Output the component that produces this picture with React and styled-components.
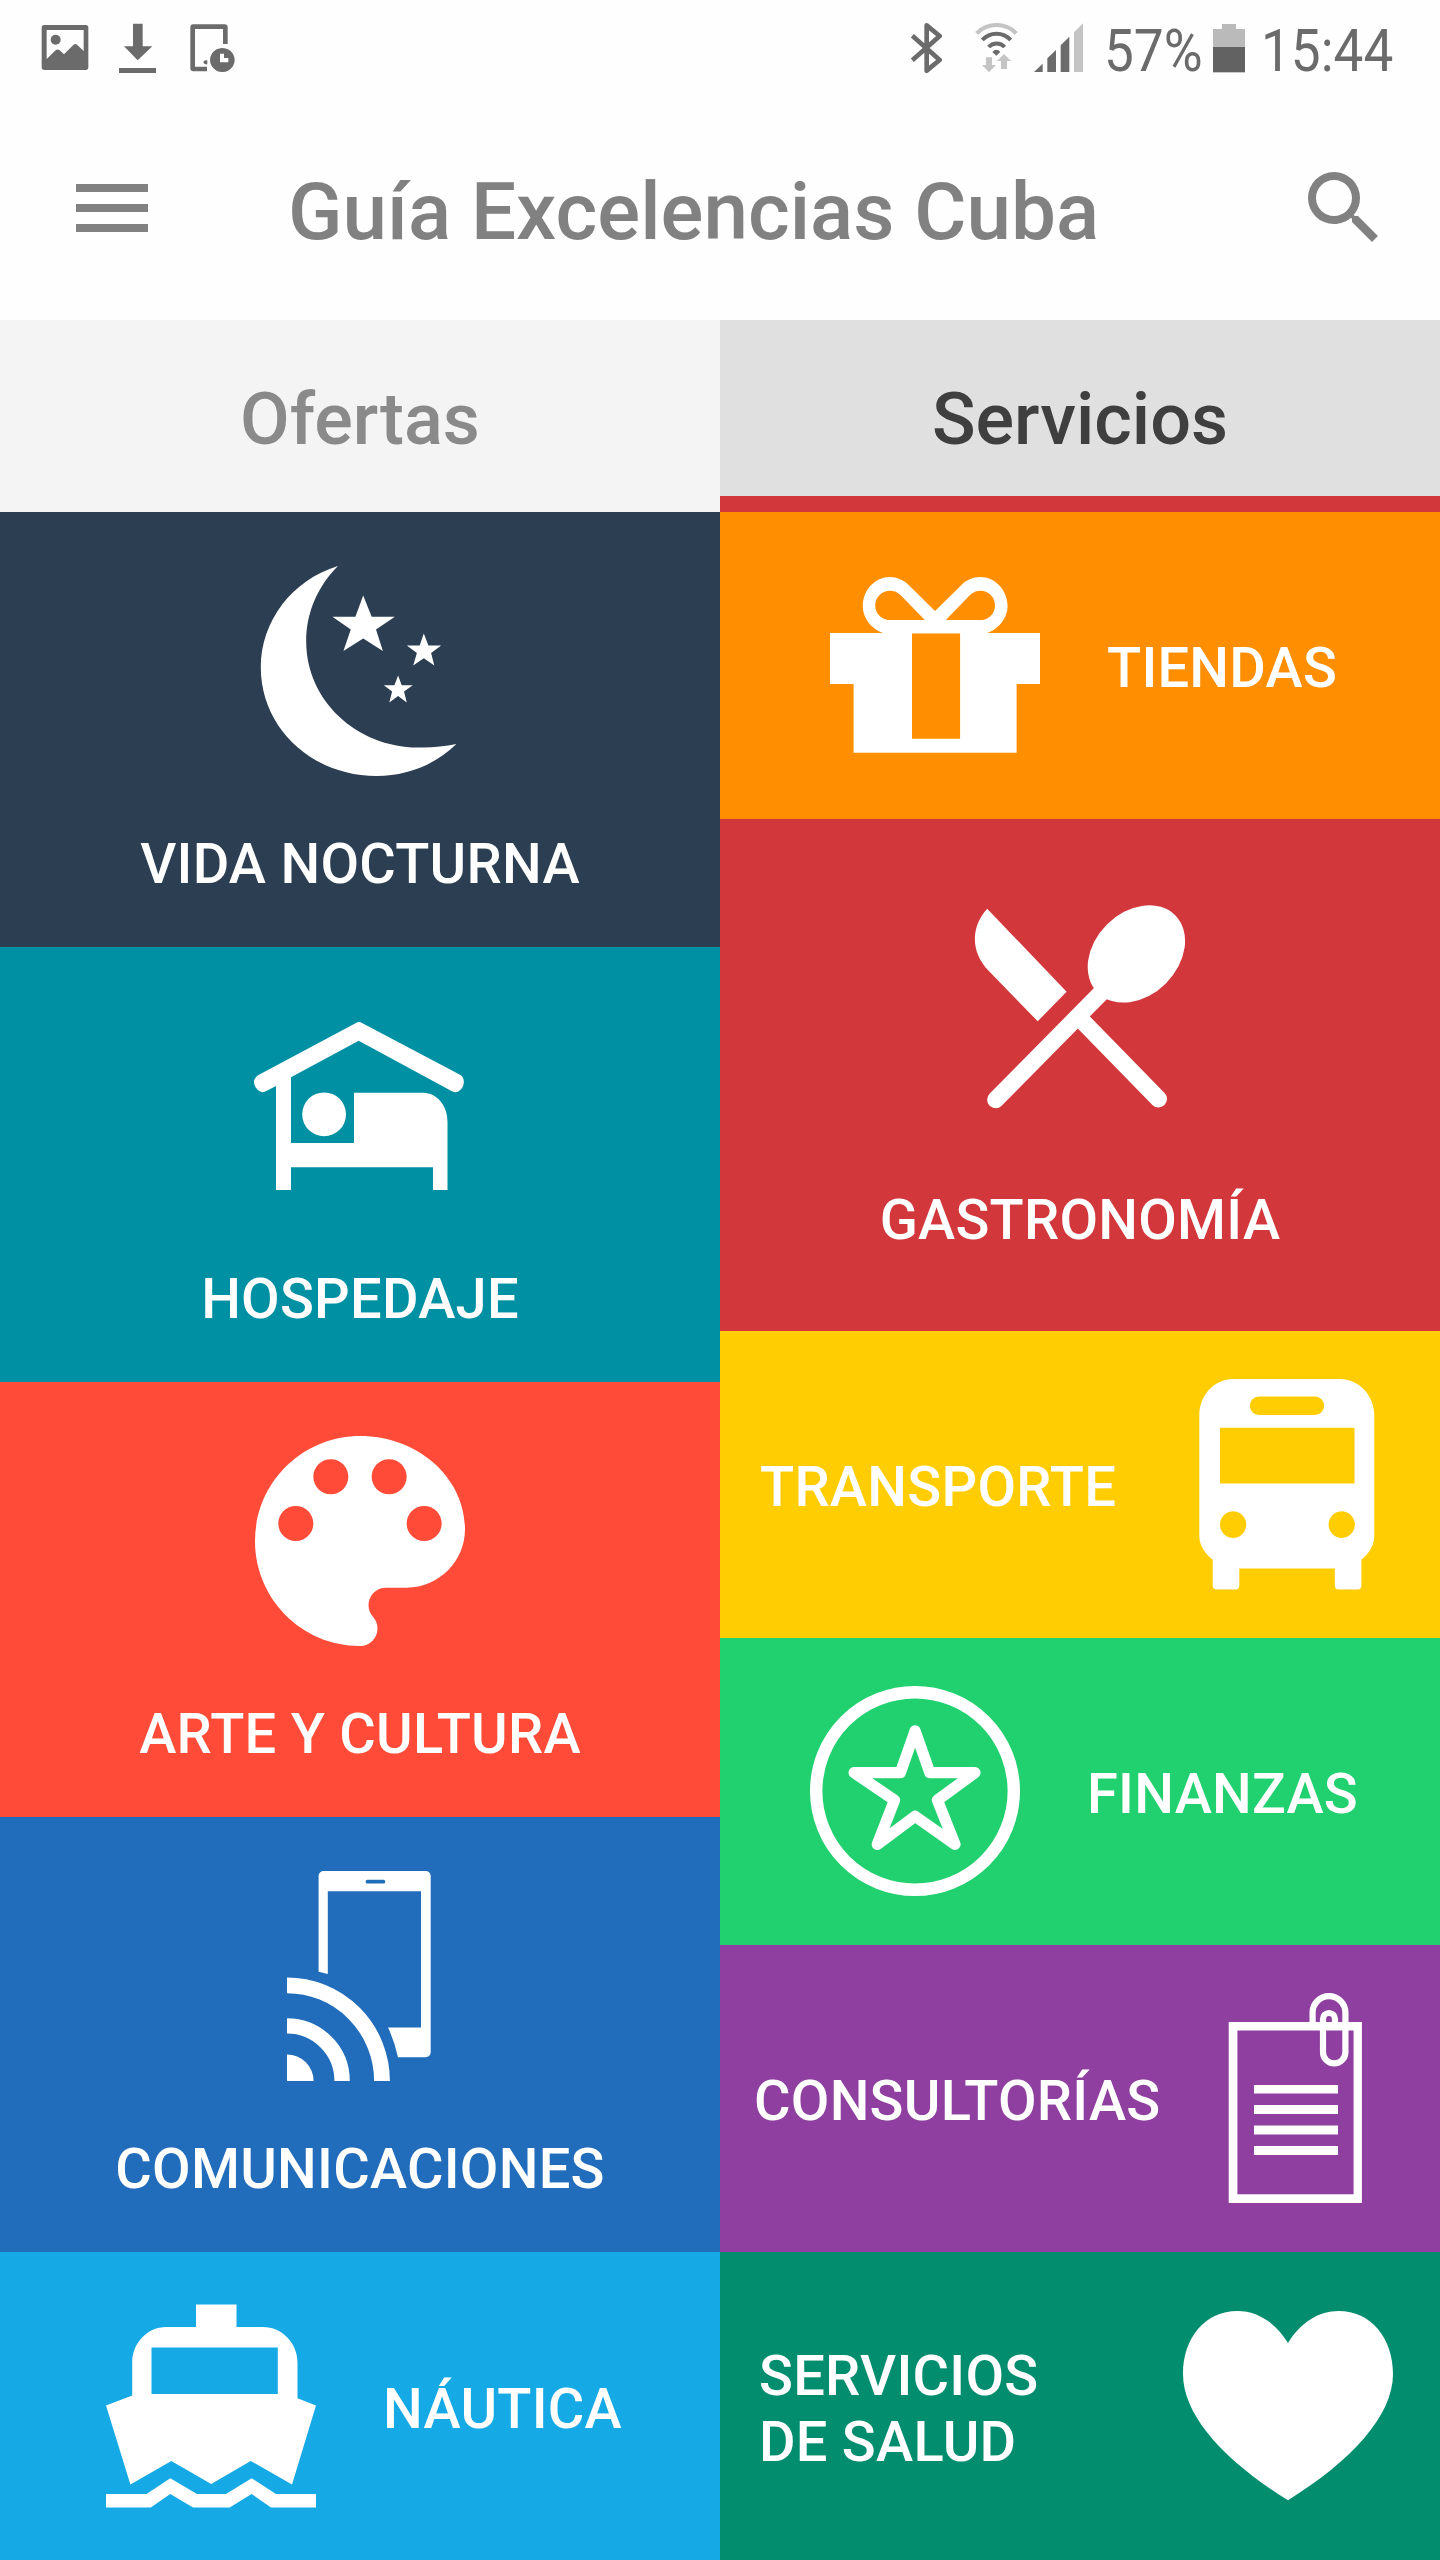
import React from 'react';
import styled, { createGlobalStyle } from 'styled-components';
import { MdMenu, MdSearch } from 'react-icons/md';

const GlobalStyle = createGlobalStyle`
  body {
    margin: 0;
    background-color: #fefefe;
    font-family: Roboto, 'Liberation Sans', sans-serif;
  }
`;

const Screen = styled.div`
  display: flex;
  flex-direction: column;
  width: 1440px;
  height: 2560px;
  overflow: hidden;
`;

const StatusBar = styled.div`
  display: flex;
  justify-content: space-between;
  box-sizing: border-box;
  height: 96px;
  padding: 23px 42px 0 41px;
  color: #6b6b6b;
`;

const StatusGroup = styled.div`
  display: flex;
  align-items: flex-start;
`;

const StatusIcon = styled.svg`
  display: block;
  flex: none;
  height: 50px;
  width: ${props => props.$width}px;
  margin-right: ${props => props.$gap || 0}px;
  fill: currentColor;
  .light {
    fill: #c4c4c4;
  }
`;

const StatusText = styled.div`
  width: ${props => props.$width}px;
  height: 50px;
  margin-right: ${props => props.$gap || 0}px;
  font-size: 60px;
  line-height: 56px;
  white-space: nowrap;
  span {
    display: inline-block;
    transform: scaleX(0.885);
    transform-origin: left;
  }
`;

const AppBar = styled.header`
  display: flex;
  align-items: center;
  height: 224px;
  padding: 0 48px 0 64px;
  color: #818181;
  svg {
    display: block;
    width: 96px;
    height: 96px;
  }
`;

const Title = styled.h1`
  flex: 1;
  margin: 0 0 0 128px;
  padding-top: 7px;
  font-size: 80px;
  font-weight: 500;
  line-height: 94px;
  white-space: nowrap;
`;

const Tabs = styled.nav`
  display: grid;
  grid-template-columns: 1fr 1fr;
  height: 192px;
`;

const Tab = styled.div`
  display: flex;
  align-items: center;
  justify-content: center;
  box-sizing: border-box;
  height: 192px;
  padding-top: 7px;
  font-size: 72px;
  font-weight: 500;
  color: ${props => (props.$active ? '#3f3f3f' : '#8a8a8a')};
  background-color: ${props => (props.$active ? '#e0e0e0' : '#f4f4f4')};
  box-shadow: ${props => (props.$active ? 'inset 0 -16px #d2373b' : 'none')};
`;

const Grid = styled.main`
  display: grid;
  grid-template-columns: repeat(2, minmax(0, 1fr));
`;

const Column = styled.div`
  display: flex;
  flex-direction: column;
`;

const Tile = styled.div`
  display: flex;
  box-sizing: border-box;
  height: ${props => props.$height}px;
  color: white;
  background-color: ${props => props.$color};
`;

const StackedTile = styled(Tile)`
  flex-direction: column;
  align-items: center;
  gap: ${props => props.$gap || 48}px;
  padding-top: ${props => props.$top || 54}px;
`;

const RowTile = styled(Tile)`
  align-items: center;
  justify-content: ${props => (props.$spread ? 'space-between' : 'flex-start')};
  gap: ${props => (props.$spread ? 0 : 67)}px;
  padding: 0 ${props => props.$right || 0}px 0 ${props => props.$left}px;
  svg {
    align-self: flex-start;
    margin-top: 48px;
  }
`;

const Label = styled.div`
  padding: 7px 0 2px;
  font-size: 56px;
  font-weight: 500;
  line-height: 66px;
  letter-spacing: 0.25px;
  white-space: nowrap;
`;

const Icon = styled.svg`
  display: block;
  flex: none;
  width: 210px;
  height: 210px;
  overflow: visible;
  fill: white;
  .line {
    fill: none;
    stroke: white;
  }
`;

const Moon = () => (
  <Icon viewBox="0 0 210 210">
    <path d="M83 0C37 14 5.8 55 5.8 101.5C5.8 162 57 210 121.5 210C153 210 181 198 201.4 178C189 180.5 176 182 163 181.5C101 181 51.2 134 51.2 75.4C51.2 46 63 20 83 0z" />
    <path d="M108.2 29.6L116.7 50.7H139.9L121 63.4L127.9 85L108.2 72.6L88.4 85L95.8 63.4L77.4 50.7H100.4z" />
    <path d="M168.8 67.4L173.4 79.4H186.2L176.1 87.1L179.3 99.5L168.8 92.3L158.2 99.5L161.9 87.1L151.8 79.4H164.7z" />
    <path d="M143.1 109.6L146.7 119.2H157.8L149 125.6L151.8 136.5L143.1 130.1L134.3 136.5L137.1 125.6L128.8 119.2H139.4z" />
  </Icon>
);

const Lodging = () => (
  <Icon viewBox="0 0 210 210">
    <path d="M101 22Q104 20 107 22L205.5 74Q209.5 77 208.7 82.5Q208 87 204 90Q200 92.5 196 89.7L103.7 39.7L36 76.3V142H99V91.7H168C182 92 192.5 104 192.5 121V189H178V166.3H36V189H21V85L11.3 90Q7.6 92.5 3.6 89.5Q0 87 -1 82Q-1.3 77.5 3 74.2z" />
    <circle cx="69.1" cy="113.3" r="21.9" />
  </Icon>
);

const Palette = () => (
  <Icon viewBox="3 3 18 18">
    <path d="M12 3c-4.97 0-9 4.03-9 9s4.03 9 9 9c.83 0 1.5-.67 1.5-1.5 0-.39-.15-.74-.39-1.01-.23-.26-.38-.61-.38-.99 0-.83.67-1.5 1.5-1.5H16c2.76 0 5-2.24 5-5 0-4.42-4.03-8-9-8zm-5.5 9c-.83 0-1.5-.67-1.5-1.5S5.67 9 6.5 9 8 9.67 8 10.5 7.33 12 6.5 12zm3-4C8.67 8 8 7.33 8 6.5S8.67 5 9.5 5s1.5.67 1.5 1.5S10.33 8 9.5 8zm5 0c-.83 0-1.5-.67-1.5-1.5S13.67 5 14.5 5s1.5.67 1.5 1.5S15.33 8 14.5 8zm3 4c-.83 0-1.5-.67-1.5-1.5S16.67 9 17.5 9s1.5.67 1.5 1.5-.67 1.5-1.5 1.5z" />
  </Icon>
);

const Phone = () => (
  <Icon viewBox="0 0 210 210">
    <path
      fillRule="evenodd"
      d="M68.6 0H170.7a5 5 0 0 1 5 5V181.3a5 5 0 0 1-5 5H143Q139.5 170 133 156.6H166V20.3H72.8V103L63.6 100.7V5a5 5 0 0 1 5-5zM112.5 8.8a1.9 1.9 0 0 0 0 3.8H128.4a1.9 1.9 0 0 0 0-3.8z"
    />
    <path d="M32 183.4A26.6 26.6 0 0 1 58.6 210H32z" />
    <path className="line" strokeWidth="15.4" d="M32 154.9A55.1 55.1 0 0 1 87.1 210" />
    <path className="line" strokeWidth="15.8" d="M32 114.3A95 95.7 0 0 1 127 210" />
  </Icon>
);

const Boat = () => (
  <Icon viewBox="0 -1 210 210">
    <path
      fillRule="evenodd"
      d="M90 3.6H130.5V26H157C176 26 191.5 42 191.5 61.4V97.3L210 104.5L186 183.4L144.7 160L105.2 183L65.3 160L24.4 183.4L0 104.5L26.2 94.5V61.4C26.2 42 41.5 26 60.2 26H90zM45.5 46.6V93H171.8V46.6z"
    />
    <path d="M0 193H40.5L64.3 177.2L91 193H120L145.6 177.2L170 193H210V206.4H165L145.6 193L123.7 206.4H87L64.3 193L44.8 206.4H0z" />
  </Icon>
);

const Gift = () => (
  <Icon viewBox="0 -0.5 210 210">
    <path
      fillRule="evenodd"
      d="M0 72.5H210V123.5H186.6V192.2H23.6V123.5H0zM82 72.8V178.2H130.1V72.8z"
    />
    <path
      fillRule="evenodd"
      d="M105 50.5L79.2 25C74 19.5 67 16.5 60 16.5C45 16.5 32.8 29.5 32.8 45.5C32.8 58 42 69 53.9 72.7H156.5C168 69 177.6 58 177.6 45.5C177.6 29.5 165 16.5 150.4 16.5C143 16.5 136 19.5 131 25zM94.8 59.5L70.5 34.5Q66 30.2 60 30.2C51.5 30.2 45.2 37 45.2 45C45.2 52 50 58 57.6 59.5zM115.8 59.5L140 34.5Q144.6 30.2 150.4 30.2C159 30.2 165 37 165 45C165 52 160.5 58 153 59.5z"
    />
  </Icon>
);

const Cutlery = () => (
  <Icon viewBox="0 0 210 210">
    <path d="M12.2 6.7L91.6 89.7L62.7 119.3L13.6 68.7C-4.5 50 -4.5 25 12.2 6.7z" />
    <ellipse cx="161.4" cy="51.9" rx="54.8" ry="41.7" transform="rotate(-45 161.4 51.9)" />
    <path className="line" strokeWidth="17" strokeLinecap="round" d="M126 91L20.6 197.8" />
    <path className="line" strokeWidth="17" strokeLinecap="round" d="M103 114.5L183.5 197" />
  </Icon>
);

const Bus = () => (
  <Icon viewBox="0 -0.5 210 210">
    <path
      fillRule="evenodd"
      d="M51.3 -.5H157.8C177 -.5 192.3 16 192.3 36V156C192.3 166 187 174 179.4 180.2V206a4 4 0 0 1-4 4H156.8a4 4 0 0 1-4-4V189H57.3V206a4 4 0 0 1-4 4H34.7a4 4 0 0 1-4-4V180.2C23 174 17.3 166 17.3 156V36C17.3 16 32 -.5 51.3 -.5zM76.8 16.9a9 9.3 0 0 0 0 18.6H133.2a9 9.3 0 0 0 0-18.6zM38 48.2V103.9H172.5V48.2zM51.1 131.7a13.2 13.4 0 1 0 .01 0zM159.7 131.7a13.2 13.4 0 1 0 .01 0z"
    />
  </Icon>
);

const StarCoin = () => (
  <Icon viewBox="0 0 210 210">
    <circle className="line" cx="105" cy="105" r="98.8" strokeWidth="12.4" />
    <path
      className="line"
      strokeWidth="11.2"
      strokeLinejoin="round"
      d="M105.1 44.8L119.8 86.7H165L127.4 114.1L145 158.4L105.1 130.2L67.3 158.4L84.5 114.1L44.1 86.7H90.4z"
    />
  </Icon>
);

const Document = () => (
  <Icon viewBox="0 0 210 210">
    <path
      fillRule="evenodd"
      d="M38.7 28.9H171.9V210H38.7zM47.4 37.6V201.2H163.6V37.6z"
    />
    <path d="M64 92.1H148V100.5H64zM64 112H148V121H64zM64 132.4H148V141.5H64zM64 153H148V162H64z" />
    <path
      className="line"
      strokeWidth="6.2"
      d="M122.6 31V19.6A16.4 16.4 0 0 1 155.4 19.6V59.2A11.2 11.2 0 0 1 133 59.2V26A6 6 0 0 1 145 26V31"
    />
  </Icon>
);

const Heart = () => (
  <Icon viewBox="0 0 210 210">
    <path d="M105 200.3C42 161 0 116 0 74C0 38 22 11 54.4 11C74 11 92 22 105 43C118 22 136 11 155.6 11C188 11 210 38 210 74C210 116 168 161 105 200.3z" />
  </Icon>
);

const Status = () => (
  <StatusBar>
    <StatusGroup>
      <StatusIcon $width={48} $gap={28} viewBox="33 39 144 150">
        <path
          fillRule="evenodd"
          d="M43 45H167a8 8 0 0 1 8 8V172a8 8 0 0 1-8 8H43a8 8 0 0 1-8-8V53a8 8 0 0 1 8-8zM50 60V147L77 121Q83 116 89 121L102 133L130 105Q136 99 142 105L161 123V60z"
        />
        <circle cx="77" cy="89" r="15" />
      </StatusIcon>
      <StatusIcon $width={40} $gap={32} viewBox="261 39 120 150">
        <path d="M309 41H338V109H367L323 151L282 109H309zM267 174H378V189H267z" />
      </StatusIcon>
      <StatusIcon $width={48} viewBox="477 39 144 150">
        <path d="M490 43H584a9 9 0 0 1 9 9V102H579V57H495V170H531V184H490a9 9 0 0 1-9-9V52a9 9 0 0 1 9-9z" />
        <path d="M532 151Q521 149 520 157Q521 164 532 163z" />
        <path
          fillRule="evenodd"
          d="M577 114a37 36 0 1 0 .01 0zM570 131H582V144H595V157H570z"
        />
      </StatusIcon>
    </StatusGroup>
    <StatusGroup>
      <StatusIcon $width={33} $gap={32} viewBox="30 39 99 150">
        <path
          fill="none"
          stroke="currentColor"
          strokeWidth="14"
          strokeLinejoin="round"
          d="M37 77L119 150L80 182V46L119 78L37 151"
        />
      </StatusIcon>
      <StatusIcon $width={43} $gap={16} viewBox="225 39 129 150">
        <path fill="none" stroke="#c4c4c4" strokeWidth="12" d="M230 70A84 84 0 0 1 349 70" />
        <path fill="none" stroke="currentColor" strokeWidth="12" d="M247 90A57 57 0 0 1 332 90" />
        <path fill="none" stroke="currentColor" strokeWidth="12" d="M266 111A32 32 0 0 1 314 111" />
        <path d="M277 126Q289 112 301 126L289 137z" />
        <path className="light" d="M258 142H276V165H288L267 187L246 165H258zM312 132L333 153H321V177H303V153H291z" />
      </StatusIcon>
      <StatusIcon $width={50} $gap={20} viewBox="402 39 150 150">
        <path d="M402 186L428 161V186zM442 186V145L468 120V186zM482 186V106L508 80V186z" />
        <path className="light" d="M522 186V67L549 40V186z" />
      </StatusIcon>
      <StatusText $width={97} $gap={12}>
        <span>57%</span>
      </StatusText>
      <StatusIcon $width={32} $gap={16} viewBox="939 39 96 150">
        <path fill="#bababa" d="M966 42H1008V57H1035V112H939V57H966z" />
        <path fill="#626262" d="M939 111H1035V187H939z" />
      </StatusIcon>
      <StatusText $width={137}>
        <span>15:44</span>
      </StatusText>
    </StatusGroup>
  </StatusBar>
);

const App = () => (
  <Screen>
    <GlobalStyle />
    <Status />
    <AppBar>
      <MdMenu />
      <Title>Guía Excelencias Cuba</Title>
      <MdSearch />
    </AppBar>
    <Tabs>
      <Tab>Ofertas</Tab>
      <Tab $active>Servicios</Tab>
    </Tabs>
    <Grid>
      <Column>
        <StackedTile $height={435} $color="#2c3e52">
          <Moon />
          <Label>VIDA NOCTURNA</Label>
        </StackedTile>
        <StackedTile $height={435} $color="#0090a3">
          <Lodging />
          <Label>HOSPEDAJE</Label>
        </StackedTile>
        <StackedTile $height={435} $color="#ff4b37">
          <Palette />
          <Label>ARTE Y CULTURA</Label>
        </StackedTile>
        <StackedTile $height={435} $color="#226dbb">
          <Phone />
          <Label>COMUNICACIONES</Label>
        </StackedTile>
        <RowTile $height={308} $color="#15a9e6" $left={106}>
          <Boat />
          <Label>NÁUTICA</Label>
        </RowTile>
      </Column>
      <Column>
        <RowTile $height={307} $color="#ff8f00" $left={110}>
          <Gift />
          <Label>TIENDAS</Label>
        </RowTile>
        <StackedTile $height={512} $color="#d2373b" $top={83} $gap={68}>
          <Cutlery />
          <Label>GASTRONOMÍA</Label>
        </StackedTile>
        <RowTile $height={307} $color="#ffcd02" $left={40} $right={48} $spread>
          <Label>TRANSPORTE</Label>
          <Bus />
        </RowTile>
        <RowTile $height={307} $color="#21d06e" $left={90}>
          <StarCoin />
          <Label>FINANZAS</Label>
        </RowTile>
        <RowTile $height={307} $color="#8e3f9f" $left={34} $right={40} $spread>
          <Label>CONSULTORÍAS</Label>
          <Document />
        </RowTile>
        <RowTile $height={308} $color="#028d6f" $left={39} $right={47} $spread>
          <Label>
            SERVICIOS
            <br />
            DE SALUD
          </Label>
          <Heart />
        </RowTile>
      </Column>
    </Grid>
  </Screen>
);

export default App;
